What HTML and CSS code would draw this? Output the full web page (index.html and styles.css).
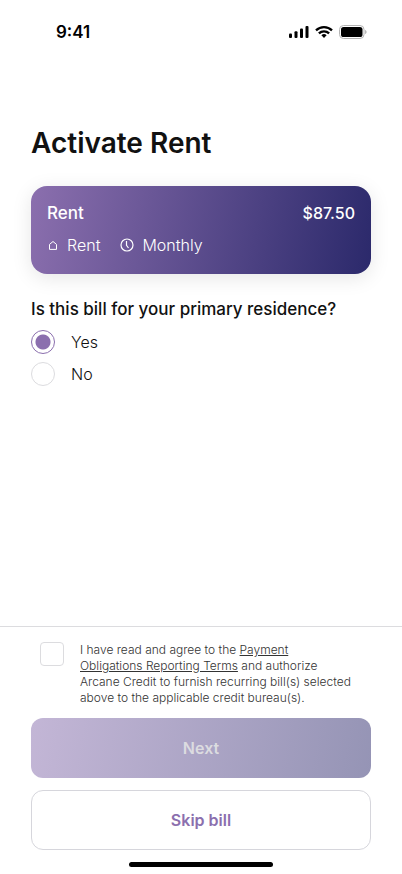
FILE: index.html
```html
<!DOCTYPE html>
<html lang="en">
<head>
<meta charset="utf-8">
<meta name="viewport" content="width=device-width, initial-scale=1">
<title>Activate Rent</title>
<link rel="stylesheet" href="styles.css">
</head>
<body>
<div class="screen">
  <header class="status">
    <span class="time">9:41</span>
    <div class="status-icons">
      <svg width="20" height="14" viewBox="0 0 20 14" aria-hidden="true">
        <rect x="0" y="8.5" width="3" height="4.5" rx="1"/>
        <rect x="5.5" y="6.2" width="3" height="6.8" rx="1"/>
        <rect x="11" y="3.5" width="3" height="9.5" rx="1"/>
        <rect x="16.5" y="1" width="3" height="12" rx="1"/>
      </svg>
      <svg width="18" height="14" viewBox="0 0 18 14" aria-hidden="true">
        <g fill="none" stroke="#000" stroke-width="2.3">
          <path d="M1 5.300a11.600 11.600 0 0 1 16 0"/>
          <path d="M3.900 8.400a7.300 7.300 0 0 1 10.200 0"/>
        </g>
        <path d="M9 13l-2.600-2.700a3.800 3.800 0 0 1 5.200 0z"/>
      </svg>
      <svg width="28" height="14" viewBox="0 0 28 14" aria-hidden="true">
        <rect x=".5" y=".5" width="24.500" height="13" rx="4" fill="#fff" stroke="#b4b4b4"/>
        <rect x="2" y="2" width="21.500" height="10" rx="2.600"/>
        <path d="M26.200 5v4c.8-.3 1.300-1.100 1.300-2s-.5-1.700-1.300-2z" fill="#a8a8a8"/>
      </svg>
    </div>
  </header>

  <main class="content">
    <h1>Activate Rent</h1>
    <section class="card">
      <div class="card-row">
        <span>Rent</span>
        <span class="amount">$87.50</span>
      </div>
      <div class="card-meta">
        <span class="meta">
          <svg width="12" height="16" viewBox="0 0 12 16" fill="none" stroke="#fff" aria-hidden="true"><path d="M2.500 7.400L6 4.500l3.500 2.900v5h-7z"/></svg>
          Rent
        </span>
        <span class="meta">
          <svg width="14" height="16" viewBox="0 0 14 16" fill="none" stroke="#fff" stroke-width="1.200" aria-hidden="true"><circle cx="7" cy="8" r="6"/><path d="M6.500 4v4.300l2 2.700"/></svg>
          Monthly
        </span>
      </div>
    </section>
    <fieldset class="question">
      <legend>Is this bill for your primary residence?</legend>
      <label class="option"><input type="radio" name="primary" checked>Yes</label>
      <label class="option"><input type="radio" name="primary">No</label>
    </fieldset>
  </main>

  <footer class="actions">
    <div class="terms">
      <input type="checkbox" id="agree">
      <label for="agree">I have read and agree to the <a href="#terms">Payment Obligations Reporting Terms</a> and authorize Arcane Credit to furnish recurring bill(s) selected above to the applicable credit bureau(s).</label>
    </div>
    <button type="button" class="btn next" disabled>Next</button>
    <button type="button" class="btn skip">Skip bill</button>
    <div class="home-bar"></div>
  </footer>
</div>
</body>
</html>
```
FILE: styles.css
```css
* {
  box-sizing: border-box;
}

body {
  margin: 0;
  background: #fff;
  color: #111;
  font-family: Inter, "Liberation Sans", sans-serif;
  font-size: 16px;
  line-height: 24px;
}

.screen {
  display: flex;
  flex-direction: column;
  min-height: 100vh;
}

.status {
  display: flex;
  justify-content: space-between;
  align-items: center;
  padding: 20px 35px 0 56px;
}

.time {
  color: #000;
  font-size: 17px;
  font-weight: 600;
}

.status-icons {
  display: flex;
  align-items: center;
  gap: 6px;
}

.content {
  flex: 1;
  padding: 79px 31px 24px;
}

h1 {
  margin: 0;
  font-size: 28px;
  line-height: 40px;
  font-weight: 600;
}

.card {
  display: flex;
  flex-direction: column;
  gap: 8px;
  margin-top: 23px;
  padding: 15px 16px 17px;
  border-radius: 16px;
  background: linear-gradient(100deg, #8b6fae, #2b296b);
  box-shadow: 0 4px 20px rgba(0, 0, 0, 0.1);
  color: #fff;
}

.card-row {
  display: flex;
  justify-content: space-between;
  font-size: 17px;
  font-weight: 500;
}

.amount {
  font-size: 16px;
}

.card-meta {
  display: flex;
  gap: 20px;
  font-weight: 300;
}

.meta {
  display: flex;
  align-items: center;
  gap: 8px;
}

.question {
  margin: 23px 0 0;
  padding: 0;
  border: 0;
}

.question legend {
  padding: 0;
  margin-bottom: 9px;
  font-size: 17px;
  font-weight: 500;
}

.option {
  display: flex;
  align-items: center;
  gap: 16px;
  margin-bottom: 8px;
  font-weight: 300;
}

input {
  appearance: none;
  flex: none;
  width: 24px;
  height: 24px;
  margin: 0;
  border: 1px solid #dcdcdf;
  background: #fff;
}

input[type="radio"] {
  border-radius: 50%;
}

input[type="radio"]:checked {
  border-color: #8b6fae;
  background: radial-gradient(circle, #8b6fae 7px, #fff 8px);
}

input[type="checkbox"] {
  border-radius: 4px;
}

input[type="checkbox"]:checked {
  background: #8b6fae;
}

.actions {
  display: flex;
  flex-direction: column;
  gap: 12px;
  padding: 15px 31px 7px;
  border-top: 1px solid #dcdcdf;
}

.terms {
  display: flex;
  gap: 16px;
  padding: 0 20px 0 9px;
  color: #333;
  font-size: 12px;
  line-height: 16px;
  font-weight: 300;
}

.terms a {
  color: inherit;
}

.btn {
  height: 60px;
  border: 0;
  border-radius: 12px;
  font: inherit;
  font-weight: 600;
}

.next {
  background: linear-gradient(100deg, #c3b6d6, #9594b5);
  color: #dcdce0;
}

.skip {
  border: 1px solid #d6d6dc;
  background: #fff;
  color: #8b6fae;
}

.home-bar {
  align-self: center;
  width: 144px;
  height: 5px;
  border-radius: 3px;
  background: #000;
}
```
